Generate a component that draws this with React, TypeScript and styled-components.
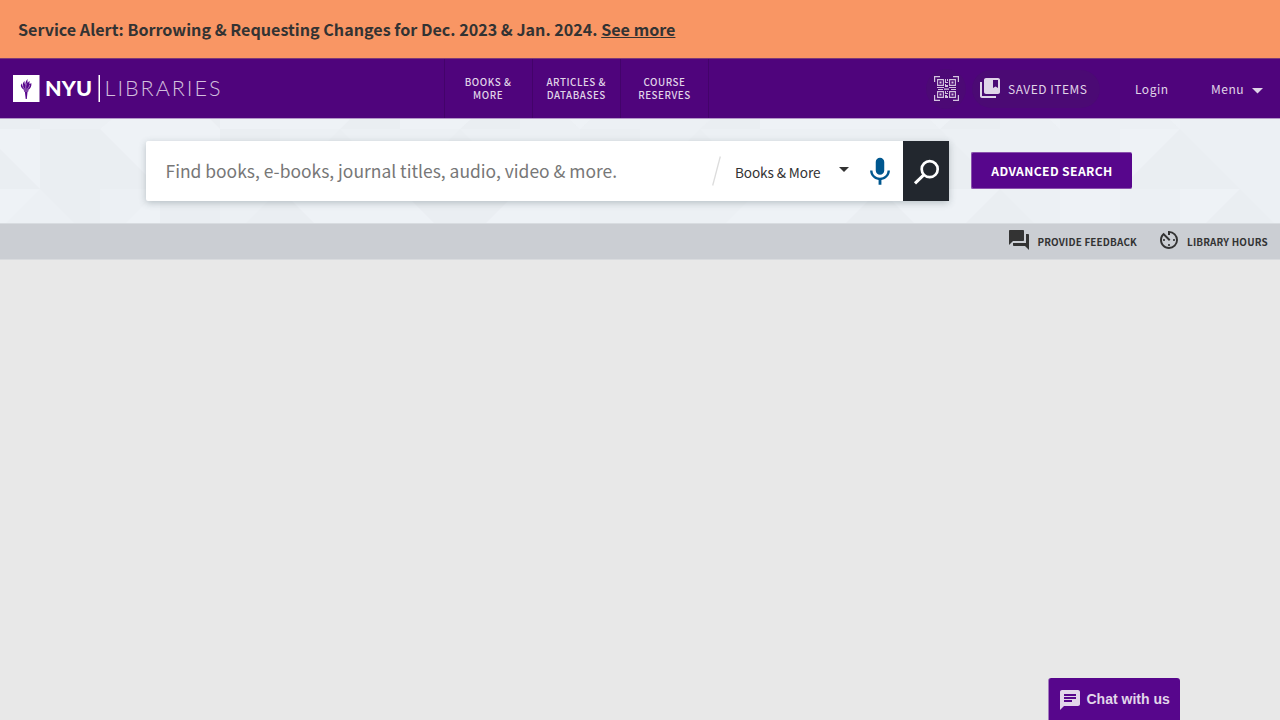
import React from 'react';
import styled, { createGlobalStyle } from 'styled-components';
import { MdCollectionsBookmark, MdForum, MdAvTimer, MdChat } from 'react-icons/md';

const Global = createGlobalStyle`
  *{box-sizing:border-box}
  html,body{margin:0;height:100%;background:#e8e8e8}
  body{font-family:"Noto Sans CJK SC","Noto Sans",sans-serif;color:#333;overflow:hidden}
  button{font:inherit;letter-spacing:inherit;border:0;background:none;padding:0;color:inherit;cursor:pointer}
  svg{display:block;flex:none}
`;

const Alert = styled.div`
  height: 58px;
  padding-left: 18px;
  display: flex;
  align-items: center;
  background: #f99664;
  font-size: 16.12px;
  font-weight: 700;
  white-space: pre;
  a { text-decoration: underline; }
`;

const Top = styled.header`
  height: 61px;
  display: grid;
  grid-template-columns: 443.5px 266px 1fr;
  background: #4f047c;
  border-top: 1px solid #7c3a78;
  border-bottom: 1px solid #b397c8;
  color: #e0d5e8;
`;

const Brand = styled.div`
  padding: 16px 0 0 13px;
`;

const Nav = styled.nav`
  display: grid;
  grid-template-columns: repeat(3, 88.2px);
  border-left: 1px solid #43036a;
`;

const NavItem = styled.a`
  display: flex;
  align-items: center;
  justify-content: center;
  text-align: center;
  white-space: pre-line;
  border-right: 1px solid #43036a;
  font-size: 9.8px;
  font-weight: 500;
  line-height: 13px;
  letter-spacing: 0.55px;
`;

const User = styled.div`
  display: flex;
  align-items: center;
  justify-content: flex-end;
  padding-right: 17px;
  font-size: 12px;
  letter-spacing: 0.5px;
`;

const QrButton = styled.button`
  width: 40px;
  height: 40px;
  border-radius: 50%;
  background: #4c0975;
  display: flex;
  align-items: center;
  justify-content: center;
  margin-right: 6px;
`;

const SavedButton = styled.button`
  width: 128px;
  height: 38px;
  border-radius: 19px;
  background: #4b0a74;
  display: flex;
  align-items: center;
  gap: 6px;
  padding: 0 0 0 6px;
  margin-right: 35px;
  svg { margin-top: -1px; }
`;

const LoginButton = styled.button`
  width: 76px;
  text-align: left;
`;

const MenuButton = styled.button`
  display: flex;
  align-items: center;
  gap: 8px;
  svg { margin-top: 5px; }
`;

const SearchArea = styled.section`
  height: 104px;
  position: relative;
  display: flex;
  align-items: flex-start;
  padding: 22px 0 0 146px;
  background: #ecf0f4;
`;

const Backdrop = styled.svg`
  position: absolute;
  inset: 0;
`;

const SearchBox = styled.div`
  position: relative;
  width: 803px;
  height: 60px;
  display: flex;
  align-items: center;
  background: #fff;
  border-radius: 2px;
  box-shadow: 0 2px 7px rgba(60, 80, 85, 0.3);
`;

const Placeholder = styled.div`
  width: 566px;
  padding: 0 0 2px 19.5px;
  font-size: 17.46px;
  color: #777;
`;

const Scope = styled.div`
  width: 126px;
  display: flex;
  align-items: center;
  justify-content: space-between;
  margin: 0 10px 0 14px;
  padding: 2px 12px 0 0;
  font-size: 13.6px;
  letter-spacing: -0.1px;
  svg { margin-top: -5px; }
`;

const MicButton = styled.button`
  width: 34px;
  height: 34px;
  margin: 2px 0 0 -8px;
`;

const SubmitButton = styled.button`
  width: 46px;
  height: 60px;
  margin-left: auto;
  background: #22272e;
`;

const Advanced = styled.button`
  && {
    position: relative;
    width: 161px;
    height: 37px;
    margin: 11px 0 0 22px;
    background: #57068c;
    border: 1px solid #8a51ad;
    border-width: 1px 0 1px 1px;
    border-radius: 2px;
    color: #fff;
    font-size: 12.2px;
    font-weight: 700;
    letter-spacing: 0.35px;
  }
`;

const SubBar = styled.div`
  height: 37px;
  display: flex;
  align-items: flex-start;
  justify-content: flex-end;
  gap: 20px;
  padding: 4px 12.2px 0 0;
  background: #cbced3;
  border-top: 1px solid #d8dce0;
  border-bottom: 1px solid #d9dbde;
`;

const SubLink = styled.a`
  display: flex;
  align-items: center;
  gap: 6px;
  font-size: 9.9px;
  font-weight: 700;
  letter-spacing: 0.18px;
  span { padding-top: 4px; line-height: 20px; }
`;

const Chat = styled.button`
  && {
    position: fixed;
    right: 100px;
    bottom: 0;
    width: 132px;
    height: 42px;
    display: flex;
    align-items: center;
    gap: 4.5px;
    padding-left: 9px;
    background: #57068c;
    border-left: 1px solid #a57cc0;
    border-radius: 3px 3px 0 0;
    color: #e2d6ea;
    font: bold 14px "Liberation Sans", sans-serif;
    white-space: nowrap;
    svg { margin-top: 2px; }
  }
`;

const Logo = () => (
  <svg width="210" height="27" viewBox="0 0 210 27" fill="#fff">
    <rect width="26.5" height="27" />
    <g fill="#57068c">
      <path d="M10.7 15.3h5l-.6 1.4h-3.8zM11.9 17h2.6l-.7 7h-1.1z" />
      <path d="M10.8 14.8C8 13 7.2 11 8.3 8.3c.5 1.5 1 2.2 1.7 2.7-.7-2.2.2-3.7 1.6-5.1-.2 2 .1 3 .7 4 .1-2.6.8-4.5 2.3-5.9-.3 1.9-.2 3.1.2 4.1.4-.9 1-1.6 1.900-2-.4 1.400-.3 2.300 0 3.200.5-.6 1-.9 1.700-1 .2 2.700-.7 4.800-2.800 6.500z" />
      <path d="M11.500 14c-1.300-1.300-1.900-2.600-1.700-4M13 14c-.5-1.500-.3-3.500.5-5.500M14.300 14c1.400-1.200 2.200-2.600 2.400-4.200" fill="none" stroke="#fff" strokeWidth=".45" />
    </g>
    <text x="32" y="21.200" fontFamily="Lato, sans-serif" fontWeight="900" fontSize="21.500" textLength="47" lengthAdjust="spacing">NYU</text>
    <rect x="85.500" width="1.500" height="27" />
    <text x="91.500" y="21.200" fontFamily="Lato, sans-serif" fontWeight="300" fontSize="21.500" fillOpacity=".75" textLength="116" lengthAdjust="spacing">LIBRARIES</text>
  </svg>
);

const QrIcon = () => (
  <svg width="25" height="25" viewBox="0 0 25 25" fill="none" stroke="#d4c4df" strokeWidth="1.2">
    <path d="M.6 6V.6H6M19 .6h5.400V6M24.400 19v5.400H19M6 24.400H.6V19" />
    <path d="M3.600 3.600h5.800v5.800H3.600zM15.600 3.600h5.800v5.800h-5.800zM3.600 15.600h5.800v5.800H3.600zM15.600 15.600h5.800v5.800h-5.800z" strokeWidth="1.100" />
    <g fill="#d4c4df" stroke="none">
      <path d="M5.500 5.500h2v2h-2zM17.500 5.500h2v2h-2zM5.500 17.500h2v2h-2zM17.500 17.500h2v2h-2z" />
      <path d="M11 3h1v3h2v1h-3zM13 3h1v2h-1zM11 8h1v1h2v2h-3zM3 11h7v1H3zM15 11h7v1h-7zM4 13h5v1H4zM10 12.500h5v1.200h-5zM17 13h5v1h-5zM11 15h1v2h2v1h-3zM13 15h1v1h-1zM11 19h2v3h-2zM13 20h1v2h-1z" />
    </g>
  </svg>
);

const Caret = ({ size, color }: { size: number; color: string }) => (
  <svg width={size} height={size / 2} viewBox="0 0 10 5" fill={color}><path d="M0 0h10L5 5z" /></svg>
);

const LIGHT = '#eff3f8';
const DARK = '#e9ecf1';

const shapes: [string, string][] = [
  [DARK, 'M0 0H40V10H0zM210 0H220V10zM350 0H400V10H340zM471 0H520V10H460zM711 0H760V10H700zM951 0H1000V10H940z'],
  [LIGHT, 'M112 0H210L220 10V0H350L340 10H100zM400 0H471L460 10H400zM760 0H820V10H760zM820 0H880V10H820zM569 0H591L580 10zM929 0H951L940 10zM1049 0H1060V10zM1169 0H1180V10z'],
  [LIGHT, 'M0 10H40V70L0 30zM100 10H220V70H160zM1120 10H1180L1120 70z'],
  [DARK, 'M0 30L40 70H0zM40 10H100L160 70H40zM220 10H280V70H220zM340 10L370 40H310zM460 10L490 40H430zM580 10H640V40H580zM700 10L730 40H670zM880 10H940L1000 70H880zM1180 10L1240 70H1120z'],
  [LIGHT, 'M0 70H40L6 104H0zM160 70V104H126zM280 70H400L434 104H314zM520 70H580V104H486zM760 70H880L846 104H726zM880 70H1000L966 104H914zM1060 70H1120V104H1060zM1180 70H1240L1206 104H1180z'],
  [DARK, 'M40 70H100V104H74zM160 70H220V104H160zM280 70L314 104H246zM400 70H520L486 104H434zM880 70L914 104H846zM1000 70L1034 104H966zM1240 70L1274 104H1206z'],
];

export default function App() {
  return (
    <>
      <Global />
      <Alert>Service Alert: Borrowing &amp; Requesting Changes for Dec. 2023 &amp; Jan. 2024. <a>See more</a></Alert>
      <Top>
        <Brand><Logo /></Brand>
        <Nav>
          <NavItem>{'BOOKS &\nMORE'}</NavItem>
          <NavItem>{'ARTICLES &\nDATABASES'}</NavItem>
          <NavItem>{'COURSE\nRESERVES'}</NavItem>
        </Nav>
        <User>
          <QrButton aria-label="Scan"><QrIcon /></QrButton>
          <SavedButton><MdCollectionsBookmark size={24} />SAVED ITEMS</SavedButton>
          <LoginButton>Login</LoginButton>
          <MenuButton>Menu<Caret size={11} color="#e0d5e8" /></MenuButton>
        </User>
      </Top>
      <SearchArea>
        <Backdrop width="1280" height="104" viewBox="0 0 1280 104">
          {shapes.map(([fill, d], i) => <path key={i} fill={fill} d={d} opacity=".65" />)}
        </Backdrop>
        <SearchBox>
          <Placeholder>Find books, e-books, journal titles, audio, video &amp; more.</Placeholder>
          <svg width="9" height="30" viewBox="0 0 9 30"><path d="M.7 29.500L8.300.5" stroke="#dcdcdc" strokeWidth="1.300" /></svg>
          <Scope>Books &amp; More<Caret size={10} color="#333" /></Scope>
          <MicButton aria-label="Voice search">
            <svg width="34" height="34" viewBox="0 0 24 24" fill="#00578f">
              <path d="M12 14c1.660 0 2.990-1.340 2.990-3L15 5c0-1.660-1.340-3-3-3S9 3.340 9 5v6c0 1.660 1.340 3 3 3zm5.300-3c0 3-2.540 5.100-5.300 5.100S6.700 14 6.700 11H5c0 3.410 2.720 6.230 6 6.720V21h2v-3.280c3.280-.48 6-3.300 6-6.720h-1.700z" />
            </svg>
          </MicButton>
          <SubmitButton aria-label="Search">
            <svg width="46" height="60" viewBox="0 0 46 60" fill="none" stroke="#fff">
              <circle cx="26.700" cy="28.200" r="8" strokeWidth="2.700" />
              <path d="M20.800 33.800L12 42.300" strokeWidth="3" />
            </svg>
          </SubmitButton>
        </SearchBox>
        <Advanced>ADVANCED SEARCH</Advanced>
      </SearchArea>
      <SubBar>
        <SubLink><MdForum size={24} /><span>PROVIDE FEEDBACK</span></SubLink>
        <SubLink><MdAvTimer size={24} /><span>LIBRARY HOURS</span></SubLink>
      </SubBar>
      <Chat><MdChat size={24} />Chat with us</Chat>
    </>
  );
}
